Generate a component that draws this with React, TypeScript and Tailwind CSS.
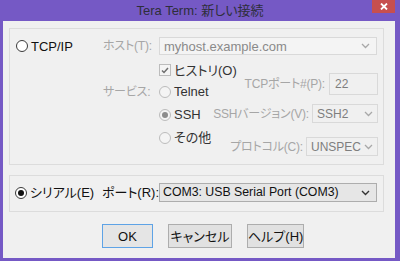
import React from 'react';

const Radio = ({ checked, disabled }: { checked?: boolean; disabled?: boolean }) => (
  <span
    className={`w-[12px] h-[12px] shrink-0 rounded-full border flex items-center justify-center ${
      disabled ? 'border-[#bcbcbc] bg-[#f4f4f4]' : 'border-[#3a3a3a] bg-white'
    }`}
  >
    {checked && (
      <span className={`w-[6px] h-[6px] rounded-full ${disabled ? 'bg-[#8c8c8c]' : 'bg-[#111111]'}`} />
    )}
  </span>
);

const Chevron = () => (
  <svg width="9" height="6" viewBox="0 0 9 6" className="shrink-0">
    <polyline points="1,1 4.5,4.5 8,1" fill="none" stroke="#a8a8a8" strokeWidth="1.3" />
  </svg>
);

const DisabledSelect = ({ value, width }: { value: string; width: string }) => (
  <div className={`${width} shrink-0 h-full border border-[#d9d9d9] bg-[#f0f0f0] flex items-center pl-[4px] pr-[4px]`}>
    <span className="flex-1 text-[#7e7e7e] text-[12px] leading-none whitespace-nowrap">{value}</span>
    <Chevron />
  </div>
);

const Label = ({ children }: { children: React.ReactNode }) => (
  <span className="text-[#a6a6a6] text-[12px] tracking-[-0.2px] leading-none whitespace-nowrap">{children}</span>
);

const Text = ({ children, dark }: { children: React.ReactNode; dark?: boolean }) => (
  <span className={`${dark ? 'text-[#111]' : 'text-[#333]'} leading-none whitespace-nowrap`}>{children}</span>
);

export default function App() {
  return (
    <div className="w-[400px] h-[261px] bg-[#7559c5] flex flex-col text-[13px] font-['Liberation_Sans','Noto_Sans_CJK_JP',sans-serif] [font-feature-settings:'palt']">
      {/* title bar */}
      <div className="h-[21px] shrink-0 relative flex items-center justify-center">
        <span className="text-[#2e2e3a] leading-none whitespace-nowrap">Tera Term: 新しい接続</span>
        <div className="absolute top-0 right-[5px] w-[23px] h-[13px] bg-[#c74f4f] flex items-center justify-center">
          <svg width="8" height="7" viewBox="0 0 8 7">
            <path d="M1 0.5 L7 6.5 M7 0.5 L1 6.5" stroke="white" strokeWidth="1.8" />
          </svg>
        </div>
      </div>

      {/* client area */}
      <div className="flex-1 ml-[3px] mr-[5px] mb-[3px] bg-[#f0f0f0] px-[6px] pt-[7px] flex flex-col">
        {/* TCP/IP group */}
        <div className="w-[375px] h-[137px] border border-[#dcdcdc] flex flex-col">
          <div className="flex h-[18px] mt-[8px]">
            <div className="w-[93px] shrink-0 flex items-center pl-[6px] gap-[3px]">
              <Radio />
              <Text dark>TCP/IP</Text>
            </div>
            <div className="w-[56px] shrink-0 flex items-center">
              <Label>ホスト(T):</Label>
            </div>
            <div className="w-[218px] shrink-0 h-full border border-[#d9d9d9] bg-[#f4f4f4] flex items-center pl-[4px] pr-[6px]">
              <span className="flex-1 text-[#8a8a8a] leading-none whitespace-nowrap">myhost.example.com</span>
              <Chevron />
            </div>
          </div>

          <div className="flex">
            {/* left: history + service radios */}
            <div className="w-[222px] shrink-0 flex flex-col">
              <div className="h-[14px] mt-[8px] flex items-center pl-[149px] gap-[3px]">
                <span className="w-[12px] h-[12px] shrink-0 border border-[#bcbcbc] bg-[#f4f4f4] flex items-center justify-center">
                  <svg width="8" height="7" viewBox="0 0 8 7">
                    <polyline points="1,3.5 3,5.5 7,1" fill="none" stroke="#6e6e6e" strokeWidth="1.5" />
                  </svg>
                </span>
                <Text>ヒストリ(O)</Text>
              </div>
              <div className="mt-[3px] flex">
                <div className="w-[93px] shrink-0" />
                <div className="w-[56px] shrink-0 h-[23px] flex items-center">
                  <Label>サービス:</Label>
                </div>
                <div className="flex flex-col">
                  <div className="h-[23px] flex items-center gap-[3px]">
                    <Radio disabled />
                    <Text>Telnet</Text>
                  </div>
                  <div className="h-[23px] flex items-center gap-[3px]">
                    <Radio checked disabled />
                    <Text>SSH</Text>
                  </div>
                  <div className="h-[23px] flex items-center gap-[3px]">
                    <Radio disabled />
                    <Text>その他</Text>
                  </div>
                </div>
              </div>
            </div>

            {/* right: port / version / protocol */}
            <div className="flex-1 min-w-0 flex flex-col items-end pr-[5px]">
              <div className="h-[22px] mt-[18px] flex items-center gap-[4px]">
                <Label>TCPポート#(P):</Label>
                <div className="w-[49px] shrink-0 h-full border border-[#d9d9d9] bg-[#f0f0f0] flex items-center pl-[5px]">
                  <span className="text-[#7e7e7e] text-[12px] leading-none">22</span>
                </div>
              </div>
              <div className="h-[19px] mt-[9px] flex items-center gap-[3px]">
                <Label>SSHバージョン(V):</Label>
                <DisabledSelect value="SSH2" width="w-[66px]" />
              </div>
              <div className="h-[19px] mt-[14px] flex items-center gap-[3px]">
                <Label>プロトコル(C):</Label>
                <DisabledSelect value="UNSPEC" width="w-[72px]" />
              </div>
            </div>
          </div>
        </div>

        {/* Serial group */}
        <div className="w-[375px] h-[37px] mt-[10px] border border-[#dcdcdc]">
          <div className="flex h-[19px] mt-[7px]">
            <div className="w-[92px] shrink-0 flex items-center pl-[5px] gap-[3px]">
              <Radio checked />
              <Text dark>シリアル(E)</Text>
            </div>
            <div className="w-[57px] shrink-0 flex items-center">
              <Text dark>ポート(R):</Text>
            </div>
            <div className="w-[218px] shrink-0 h-full border border-[#adadad] bg-[#e6e6e6] flex items-center pl-[3px] pr-[6px]">
              <span className="flex-1 text-[#111] text-[12.3px] leading-none whitespace-nowrap">COM3: USB Serial Port (COM3)</span>
              <svg width="9" height="6" viewBox="0 0 9 6" className="shrink-0">
                <polyline points="1,1 4.5,4.5 8,1" fill="none" stroke="#333" strokeWidth="1.4" />
              </svg>
            </div>
          </div>
        </div>

        {/* buttons */}
        <div className="flex h-[24px] mt-[12px] pl-[93px] gap-[15px]">
          <button className="w-[51px] h-full border border-[#5ea3e6] bg-[#e5e5e5] text-[#111] leading-none whitespace-nowrap">OK</button>
          <button className="w-[64px] h-full border border-[#adadad] bg-[#e1e1e1] text-[#111] leading-none whitespace-nowrap">キャンセル</button>
          <button className="w-[57px] h-full border border-[#adadad] bg-[#e1e1e1] text-[#111] leading-none whitespace-nowrap">ヘルプ(H)</button>
        </div>
      </div>
    </div>
  );
}
